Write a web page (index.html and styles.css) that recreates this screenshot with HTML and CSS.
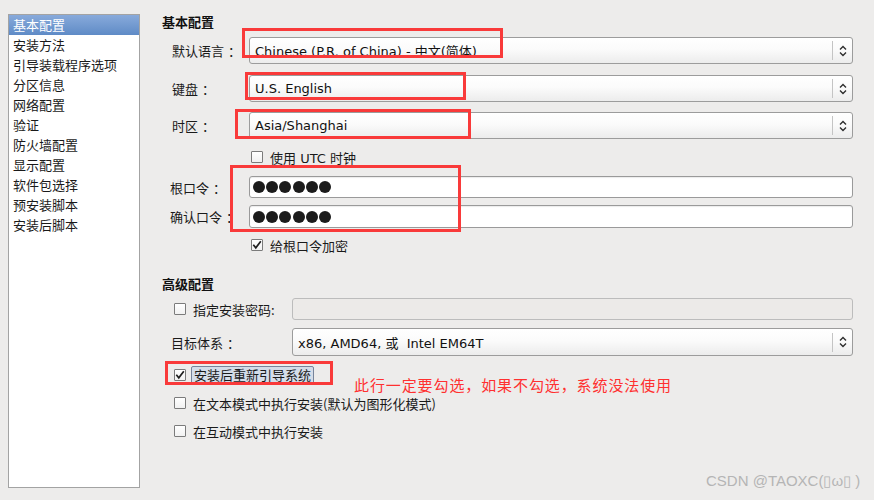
FILE: index.html
```html
<!DOCTYPE html>
<html lang="zh-CN">
<head>
<meta charset="utf-8">
<title>基本配置</title>
<link rel="stylesheet" href="styles.css">
</head>
<body>
<div class="window">
  <nav class="sidebar">
    <div class="item selected">基本配置</div>
    <div class="item">安装方法</div>
    <div class="item">引导装载程序选项</div>
    <div class="item">分区信息</div>
    <div class="item">网络配置</div>
    <div class="item">验证</div>
    <div class="item">防火墙配置</div>
    <div class="item">显示配置</div>
    <div class="item">软件包选择</div>
    <div class="item">预安装脚本</div>
    <div class="item">安装后脚本</div>
  </nav>

  <main class="content">
    <div class="heading h-basic">基本配置</div>

    <div class="row basic r-lang">
      <span class="label">默认语言<span class="colon">：</span></span>
      <div class="combo"><span class="combo-text">Chinese (P.R. of China) - 中文(简体)</span><span class="combo-btn"><svg width="8" height="12" viewBox="0 0 8 12"><path d="M1 4.5 L4 1.5 L7 4.5 M1 7.5 L4 10.5 L7 7.5" fill="none" stroke="#2e2e2e" stroke-width="1.4"/></svg></span></div>
    </div>

    <div class="row basic r-kbd">
      <span class="label">键盘<span class="colon">：</span></span>
      <div class="combo"><span class="combo-text">U.S. English</span><span class="combo-btn"><svg width="8" height="12" viewBox="0 0 8 12"><path d="M1 4.5 L4 1.5 L7 4.5 M1 7.5 L4 10.5 L7 7.5" fill="none" stroke="#2e2e2e" stroke-width="1.4"/></svg></span></div>
    </div>

    <div class="row basic r-tz">
      <span class="label">时区<span class="colon">：</span></span>
      <div class="combo"><span class="combo-text">Asia/Shanghai</span><span class="combo-btn"><svg width="8" height="12" viewBox="0 0 8 12"><path d="M1 4.5 L4 1.5 L7 4.5 M1 7.5 L4 10.5 L7 7.5" fill="none" stroke="#2e2e2e" stroke-width="1.4"/></svg></span></div>
    </div>

    <div class="row basic r-utc">
      <span class="label"></span>
      <div class="check-item indent-basic"><span class="checkbox"></span><span class="check-text">使用 UTC 时钟</span></div>
    </div>

    <div class="row basic r-root">
      <span class="label label-pw">根口令<span class="colon">：</span></span>
      <div class="entry"><span class="dots"><i></i><i></i><i></i><i></i><i></i><i></i></span></div>
    </div>

    <div class="row basic r-confirm">
      <span class="label label-pw">确认口令<span class="colon">：</span></span>
      <div class="entry"><span class="dots"><i></i><i></i><i></i><i></i><i></i><i></i></span></div>
    </div>

    <div class="row basic r-encrypt">
      <span class="label"></span>
      <div class="check-item indent-basic"><span class="checkbox checked"><svg width="12" height="12" viewBox="0 0 12 12"><path d="M2.3 5.8 L4.8 8.8 L9.8 2.2" fill="none" stroke="#1e1e1e" stroke-width="1.7"/></svg></span><span class="check-text">给根口令加密</span></div>
    </div>

    <div class="heading h-adv">高级配置</div>

    <div class="row adv r-bootpw">
      <div class="adv-lead check-item"><span class="checkbox"></span><span class="check-text">指定安装密码:</span></div>
      <div class="entry disabled"></div>
    </div>

    <div class="row adv r-arch">
      <span class="adv-lead label-adv">目标体系<span class="colon">：</span></span>
      <div class="combo"><span class="combo-text">x86, AMD64, 或 &nbsp;Intel EM64T</span><span class="combo-btn"><svg width="8" height="12" viewBox="0 0 8 12"><path d="M1 4.5 L4 1.5 L7 4.5 M1 7.5 L4 10.5 L7 7.5" fill="none" stroke="#2e2e2e" stroke-width="1.4"/></svg></span></div>
    </div>

    <div class="row adv-check r-reboot">
      <div class="check-item"><span class="checkbox checked"><svg width="12" height="12" viewBox="0 0 12 12"><path d="M2.3 5.8 L4.8 8.8 L9.8 2.2" fill="none" stroke="#1e1e1e" stroke-width="1.7"/></svg></span><span class="check-text focused">安装后重新引导系统</span></div>
      <span class="note">此行一定要勾选，如果不勾选，系统没法使用</span>
    </div>

    <div class="row adv-check r-text">
      <div class="check-item"><span class="checkbox"></span><span class="check-text">在文本模式中执行安装(默认为图形化模式)</span></div>
    </div>

    <div class="row adv-check r-interactive">
      <div class="check-item"><span class="checkbox"></span><span class="check-text">在互动模式中执行安装</span></div>
    </div>
  </main>

  <div class="mark mark-lang"></div>
  <div class="mark mark-kbd"></div>
  <div class="mark mark-tz"></div>
  <div class="mark mark-pw"></div>
  <div class="mark mark-reboot"></div>
  <div class="watermark">CSDN @TAOXC(▯ω▯ )</div>
</div>
</body>
</html>
```

FILE: styles.css
```css
* { box-sizing: border-box; }

html, body {
  margin: 0;
  padding: 0;
  background: #edeceb;
}

body {
  font-family: "DejaVu Sans", "Noto Sans CJK SC", sans-serif;
  font-size: 13px;
  color: #1a1a1a;
}

.window {
  position: relative;
  width: 874px;
  height: 500px;
  display: flex;
  align-items: flex-start;
  padding-left: 8px;
  overflow: hidden;
}

/* ---------- sidebar ---------- */
.sidebar {
  flex: none;
  width: 132px;
  height: 474px;
  margin-top: 14px;
  background: #ffffff;
  border: 1px solid #a3a3a3;
  display: flex;
  flex-direction: column;
  font-family: "Noto Sans CJK SC", sans-serif;
}

.item {
  height: 20px;
  line-height: 20px;
  padding-left: 4px;
  color: #1a1a1a;
  white-space: nowrap;
}

.item.selected {
  color: #ffffff;
  background: linear-gradient(#88aadb, #5f8bc6);
}

/* ---------- content ---------- */
.content {
  flex: none;
  width: 691px;
  margin-left: 22px;
  display: flex;
  flex-direction: column;
}

.heading {
  height: 16px;
  line-height: 16px;
  font-weight: bold;
  font-family: "Noto Sans CJK SC", sans-serif;
  color: #111;
}

.h-basic { margin-top: 14px; }
.h-adv { margin-top: 21px; }

.row {
  display: flex;
  align-items: center;
}

.r-lang { margin-top: 7px; height: 27px; }
.r-kbd { margin-top: 11px; height: 27px; }
.r-tz { margin-top: 10px; height: 27px; }
.r-utc { margin-top: 8px; height: 20px; }
.r-root { margin-top: 9px; height: 22px; }
.r-confirm { margin-top: 7px; height: 23px; }
.r-encrypt { margin-top: 7px; height: 20px; }
.r-bootpw { margin-top: 6px; height: 22px; }
.r-arch { margin-top: 8px; height: 28px; }
.r-reboot { margin-top: 9px; height: 20px; }
.r-text { margin-top: 8px; height: 20px; }
.r-interactive { margin-top: 8px; height: 20px; }

.label {
  flex: none;
  width: 87px;
  padding-left: 10px;
  font-family: "Noto Sans CJK SC", sans-serif;
  white-space: nowrap;
}

.label-pw { padding-left: 8px; }

.colon {
  display: inline-block;
  margin-left: 4px;
}

.indent-basic { margin-left: 2px; }

.adv-lead {
  flex: none;
  width: 130px;
}

.adv .check-item { padding-left: 12px; }

.label-adv {
  padding-left: 9px;
  font-family: "Noto Sans CJK SC", sans-serif;
  white-space: nowrap;
}

.adv-check { padding-left: 12px; }

/* ---------- combo ---------- */
.combo {
  flex: 1;
  height: 100%;
  display: flex;
  align-items: center;
  border: 1px solid #9c9c9c;
  border-radius: 3px;
  background: linear-gradient(#ffffff 0%, #fbfbfb 45%, #ececec 100%);
  box-shadow: inset 0 1px 0 #ffffff;
}

.combo-text {
  flex: 1;
  padding-left: 5px;
  white-space: nowrap;
  color: #111;
}

.combo-btn {
  flex: none;
  width: 20px;
  height: 19px;
  border-left: 1px solid #c4c4c4;
  display: flex;
  align-items: center;
  justify-content: center;
  padding-left: 1px;
}

/* ---------- entry ---------- */
.entry {
  flex: 1;
  height: 100%;
  display: flex;
  align-items: center;
  background: #ffffff;
  border: 1px solid #9a9a9a;
  border-radius: 3px;
  box-shadow: inset 0 1px 1px rgba(0,0,0,0.08);
  padding-left: 3px;
}

.entry.disabled {
  background: #eceae8;
  border-color: #bcbcbc;
  box-shadow: none;
}

.dots {
  display: flex;
  gap: 1.2px;
}

.dots i {
  display: block;
  width: 12px;
  height: 12px;
  border-radius: 50%;
  background: #1b1b1b;
}

/* ---------- checkbox ---------- */
.check-item {
  display: flex;
  align-items: center;
  white-space: nowrap;
}

.checkbox {
  flex: none;
  width: 12px;
  height: 12px;
  border: 1px solid #7b7b7b;
  border-radius: 1px;
  background: linear-gradient(#ffffff, #f1f1f1);
  display: flex;
  align-items: center;
  justify-content: center;
  overflow: visible;
}

.checkbox svg { flex: none; }

.check-text {
  margin-left: 7px;
  font-family: "Noto Sans CJK SC", sans-serif;
}

.r-utc .check-text { font-family: "DejaVu Sans", "Noto Sans CJK SC", sans-serif; }

.check-text.focused {
  margin-left: 5px;
  height: 18px;
  line-height: 16px;
  padding: 0 2px;
  background: #d4dde9;
  border: 1px solid #77849a;
  border-radius: 2px;
}

.note {
  align-self: flex-start;
  margin-top: 2px;
  margin-left: 40px;
  font-family: "Noto Sans CJK SC", sans-serif;
  font-size: 15px;
  letter-spacing: 0.9px;
  line-height: 20px;
  color: #ff3030;
  white-space: nowrap;
  transform: translateY(8px);
}

/* ---------- annotation overlays ---------- */
.mark {
  position: absolute;
  border: 3px solid #f93a3a;
  pointer-events: none;
}

.mark-lang { left: 242px; top: 28px; width: 261px; height: 30px; }
.mark-kbd { left: 245px; top: 72px; width: 221px; height: 28px; }
.mark-tz { left: 235px; top: 109px; width: 236px; height: 30px; }
.mark-pw { left: 230px; top: 165px; width: 231px; height: 67px; }
.mark-reboot { left: 165px; top: 361px; width: 168px; height: 24px; }

.watermark {
  position: absolute;
  left: 706px;
  top: 471px;
  font-family: "Liberation Sans", Arial, sans-serif;
  font-size: 15px;
  line-height: 20px;
  color: #b5b5b5;
  white-space: nowrap;
}
```
